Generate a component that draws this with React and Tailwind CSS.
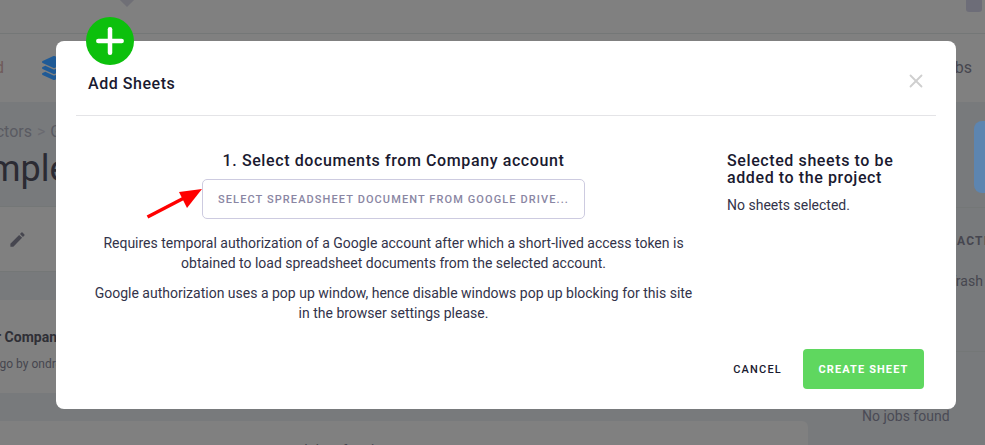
import React from "react";
import { Plus, X } from "lucide-react";
import { FaLayerGroup } from "react-icons/fa";
import { MdEdit } from "react-icons/md";

function Background() {
  return (
    <div className="flex h-[445px] w-[985px] flex-col overflow-hidden bg-[#808080] font-['Roboto',sans-serif] text-[#46464f]">
      <div className="flex h-[34px] shrink-0 justify-between border-b border-[#747777] pl-[122px] pr-[3px]">
        <div className="mt-[-5px] h-[10px] w-[10px] rotate-45 bg-[#6f6f76]" />
        <div className="mt-[-4px] h-[16px] w-[16px] rounded-[3px] bg-[#6d6d78]" />
      </div>

      <div className="flex h-[68px] shrink-0 items-center justify-between bg-[#808080] pr-[13px] text-[16px]">
        <div className="flex items-center gap-[38px]">
          <span className="ml-[-5px] text-[#6f5a5a]">d</span>
          <FaLayerGroup size={24} className="text-[#1f5a96]" />
        </div>
        <span>Jobs</span>
      </div>

      <div className="flex min-h-0 flex-1 bg-[#787a7c]">
        <div className="flex w-[808px] shrink-0 flex-col">
          <div className="h-[104px] shrink-0 overflow-hidden pt-[18px]">
            <div className="ml-[-50px] flex text-[16px] leading-[24px] text-[#5a5a62]">
              <span>Connectors</span>
              <span className="mx-[5px] text-[#6a6a70]">&gt;</span>
              <span>Google</span>
            </div>
            <div className="ml-[-52px] mt-[4px] text-[36px] leading-[42px] text-[#2b2b33]">Sample</div>
          </div>
          <div className="flex h-[66px] shrink-0 items-center border-y border-[#747777] bg-[#808080] pl-[8px]">
            <MdEdit size={19} className="text-[#46464f]" />
          </div>
          <div className="h-[28px] shrink-0" />
          <div className="h-[93px] shrink-0 rounded-r-md bg-[#808080] pt-[27px]">
            <div className="ml-[-4px] text-[14px] font-bold text-[#2f2f36]">r Company</div>
            <div className="ml-[-7px] mt-[7px] text-[12px]">ago by ondrej</div>
          </div>
          <div className="h-[28px] shrink-0" />
          <div className="flex-1 rounded-tr-md bg-[#808080] pl-[300px] pt-[19px] text-[14px]">Jobs of project</div>
        </div>

        <div className="flex-1">
          <div className="flex h-[105px] justify-end pt-[19px]">
            <div className="h-[72px] w-[14px] rounded-l-lg bg-[#5d85b0]" />
          </div>
          <div className="h-[145px] overflow-hidden border-y border-[#747777] pl-[149px] pt-[26px]">
            <div className="text-[12px] font-bold leading-[14px] tracking-[1.2px]">ACTI</div>
            <div className="ml-[-9px] mt-[23px] text-[14px] leading-[20px]">Trash</div>
          </div>
          <div className="pl-[54px] pt-[54px] text-[14px] leading-[20px] text-[#4a4a55]">No jobs found</div>
        </div>
      </div>
    </div>
  );
}

function Modal() {
  return (
    <div className="absolute left-[56px] top-[41px] flex h-[368px] w-[900px] flex-col rounded-[8px] bg-white font-['Roboto',sans-serif] text-[#1a1a30]">
      <div className="absolute left-[30px] top-[-24px] flex h-[48px] w-[48px] items-center justify-center rounded-full bg-[#0cc00c]">
        <Plus size={40} strokeWidth={2.7} className="text-white" />
      </div>

      <div className="mx-[20px] flex h-[75px] shrink-0 items-end justify-between border-b border-[#e4e4e7] pb-[21px] pl-[12px] pr-[9px]">
        <h2 className="text-[16px] font-medium leading-[20px] tracking-[0.55px]">Add Sheets</h2>
        <X size={22} strokeWidth={2} className="mb-[2px] text-[#cfcfcf]" />
      </div>

      <div className="mx-[20px] flex flex-1 gap-[16px] pt-[36px]">
        <div className="relative flex w-[635px] flex-col items-center">
          <h3 className="text-[16px] font-medium leading-[18px] tracking-[0.6px]">1. Select documents from Company account</h3>
          <button className="mt-[9px] h-[40px] w-[383px] rounded-[5px] border border-[#cdcbe0] pt-[2px] text-[11px] font-medium tracking-[1.1px] text-[#8a86a3]">
            SELECT SPREADSHEET DOCUMENT FROM GOOGLE DRIVE...
          </button>
          <svg className="absolute left-[70px] top-[32px]" width="58" height="36" viewBox="0 0 58 36">
            <path d="M1.5 33 L40 13" stroke="#ff0000" strokeWidth="3.5" fill="none" />
            <path d="M56 5 L33 8 L41 24 Z" fill="#ff0000" />
          </svg>
          <p className="mt-[14px] text-center text-[14px] leading-[20px] text-[#33334a]">
            Requires temporal authorization of a Google account after which a short-lived access token is<br />
            obtained to load spreadsheet documents from the selected account.
          </p>
          <p className="mt-[10px] text-center text-[14px] leading-[20px] text-[#33334a]">
            Google authorization uses a pop up window, hence disable windows pop up blocking for this site<br />
            in the browser settings please.
          </p>
        </div>
        <div className="flex-1">
          <h3 className="text-[16px] font-medium leading-[17px] tracking-[0.6px]">
            Selected sheets to be<br />added to the project
          </h3>
          <p className="mt-[9px] text-[14px] leading-[20px] text-[#33334a]">No sheets selected.</p>
        </div>
      </div>

      <div className="flex shrink-0 items-center justify-end gap-[21px] pb-[20px] pr-[32px]">
        <button className="pt-[2px] text-[11px] font-medium tracking-[1.2px] text-[#1a1a30]">CANCEL</button>
        <button className="h-[40px] w-[121px] rounded-[4px] bg-[#5fd75f] pt-[2px] text-[11px] font-bold tracking-[1.1px] text-white">
          CREATE SHEET
        </button>
      </div>
    </div>
  );
}

export default function App() {
  return (
    <div className="relative h-[445px] w-[985px] overflow-hidden">
      <Background />
      <Modal />
    </div>
  );
}
